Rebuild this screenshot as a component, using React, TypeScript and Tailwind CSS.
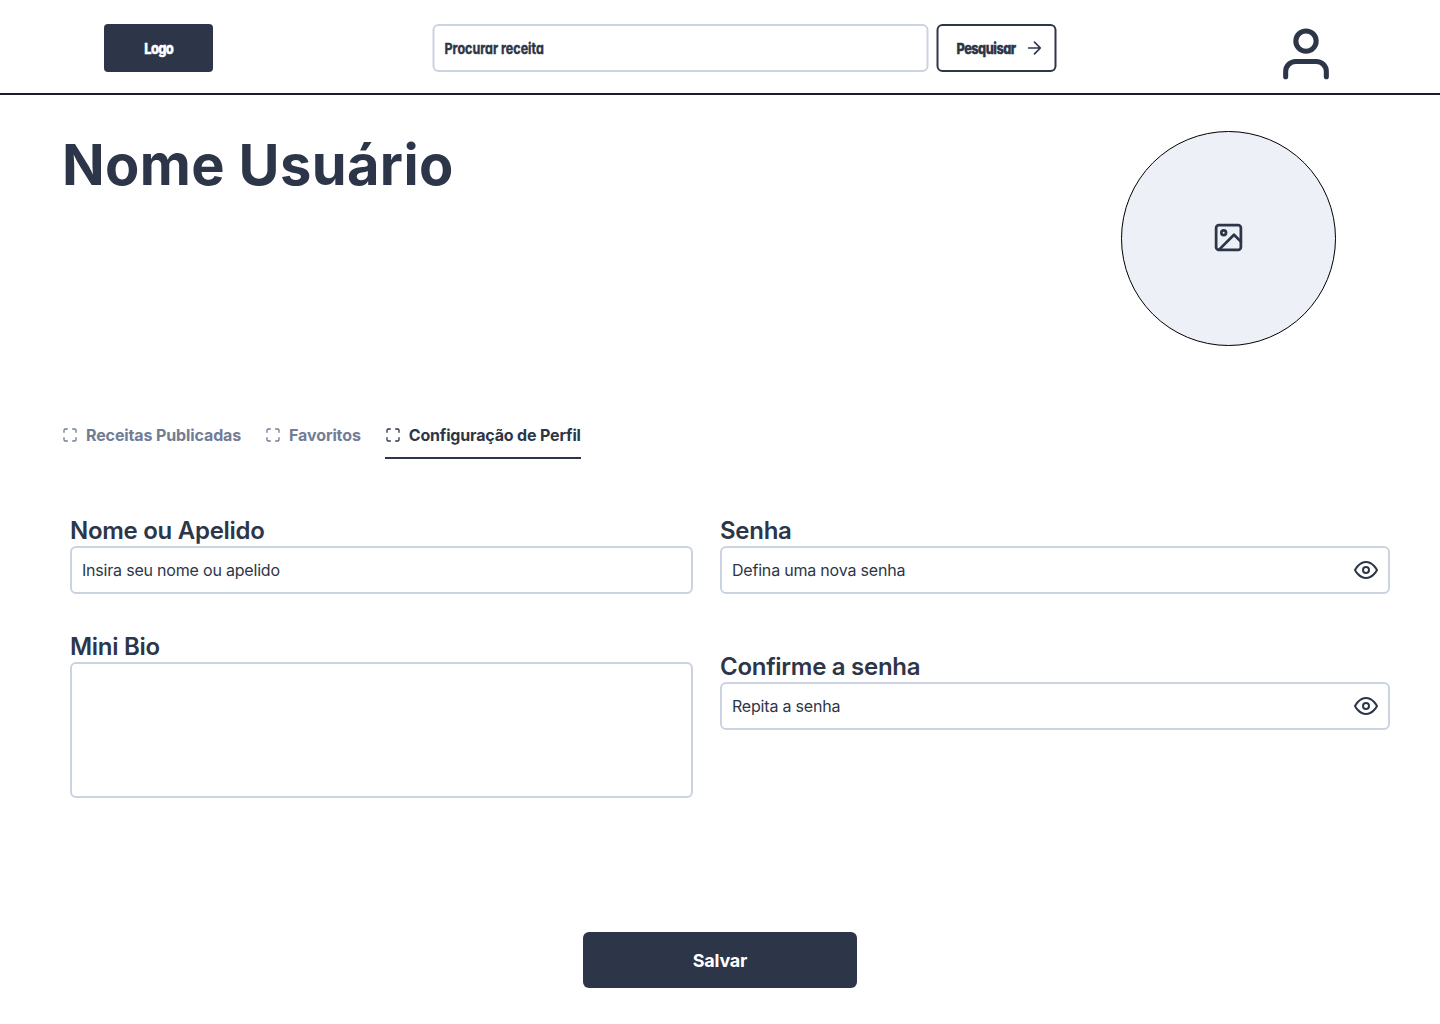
import React from "react";

type IconProps = { className?: string; strokeWidth?: number; children: React.ReactNode };

function Icon({ className = "", strokeWidth = 2, children }: IconProps) {
  return (
    <svg viewBox="0 0 24 24" fill="none" stroke="currentColor" strokeWidth={strokeWidth} strokeLinecap="round" strokeLinejoin="round" className={`shrink-0 ${className}`}>
      {children}
    </svg>
  );
}

function EyeIcon() {
  return (
    <Icon className="size-6">
      <path d="M1 12s4-8 11-8 11 8 11 8-4 8-11 8-11-8-11-8z" />
      <circle cx="12" cy="12" r="3" />
    </Icon>
  );
}

function Tab({ label, active = false }: { label: string; active?: boolean }) {
  return (
    <div className={`flex h-12 items-center gap-2 border-b-2 pt-0.5 ${active ? "border-[#2d3648] tracking-[-0.17px] text-[#2d3648]" : "border-transparent tracking-[-0.12px] text-[#717d96]"}`}>
      <Icon className="size-4">
        <path d="M8 3H5a2 2 0 0 0-2 2v3m18 0V5a2 2 0 0 0-2-2h-3m0 18h3a2 2 0 0 0 2-2v-3M3 16v3a2 2 0 0 0 2 2h3" />
      </Icon>
      <span className="text-base leading-6 font-bold whitespace-nowrap">{label}</span>
    </div>
  );
}

function Label({ children }: { children: string }) {
  return <div className="h-8 pt-px text-2xl leading-8 font-semibold tracking-[-0.28px]">{children}</div>;
}

function Field({ label, placeholder, password = false }: { label: string; placeholder: string; password?: boolean }) {
  return (
    <div>
      <Label>{label}</Label>
      <div className="flex h-12 items-center justify-between rounded-md border-2 border-[#cbd2e0] px-2.5">
        <span className="text-base tracking-[-0.2px]">{placeholder}</span>
        {password && <EyeIcon />}
      </div>
    </div>
  );
}

export default function App() {
  return (
    <div className="h-[1024px] w-[1440px] overflow-hidden bg-white font-['Inter',sans-serif] text-[#2d3648]">
      <header className="flex h-[95px] items-start border-b-2 border-[#1c1b29] pt-6 pl-[104px] [font-feature-settings:'cv11']">
        <div className="flex h-12 w-[109px] items-center justify-center rounded bg-[#2d3648] pt-0.5 text-white">
          <span className="scale-x-[0.86] text-[15px] font-extrabold tracking-[-0.8px] [-webkit-text-stroke:0.4px]">Logo</span>
        </div>
        <div className="ml-[219px] flex h-12 w-[496px] translate-x-[0.5px] items-center rounded-md border-2 border-[#cbd2e0] pt-0.5 pl-2.5">
          <span className="origin-left scale-x-[0.835] text-[15px] font-bold [-webkit-text-stroke:0.4px]">Procurar receita</span>
        </div>
        <div className="ml-[8px] flex h-12 w-[120px] translate-x-[0.5px] items-center rounded-md border-2 border-[#2d3648] pl-[18px]">
          <span className="w-[68px] origin-left scale-x-[0.85] pt-0.5 text-[15px] font-extrabold tracking-[-0.6px] [-webkit-text-stroke:0.4px]">Pesquisar</span>
          <Icon className="size-5">
            <path d="M5 12h14M12 5l7 7-7 7" />
          </Icon>
        </div>
        <Icon className="-mt-px ml-[219px] size-[61px] translate-x-[0.5px] translate-y-[0.3px]">
          <path d="M20 21v-2a4 4 0 0 0-4-4H8a4 4 0 0 0-4 4v2" />
          <circle cx="12" cy="7" r="4" />
        </Icon>
      </header>

      <section className="flex h-[316px] items-start justify-between pt-9 pr-[104px] pl-[62px]">
        <h1 className="text-[56px] leading-[68px] font-bold tracking-[0.37px]">Nome Usuário</h1>
        <div className="flex size-[215px] items-center justify-center rounded-full border border-black bg-[#edf0f7] pb-0.5">
          <Icon className="size-[33px]">
            <rect x="3" y="3" width="18" height="18" rx="2" />
            <circle cx="8.5" cy="8.5" r="1.7" />
            <path d="M21 15l-5-5L5 21" />
          </Icon>
        </div>
      </section>

      <nav className="flex gap-6 pl-[62px]">
        <Tab label="Receitas Publicadas" />
        <Tab label="Favoritos" />
        <Tab label="Configuração de Perfil" active />
      </nav>

      <main className="grid h-[417px] grid-cols-[623px_670px] gap-x-[27px] pt-[55px] pl-[70px]">
        <div className="flex flex-col gap-9">
          <Field label="Nome ou Apelido" placeholder="Insira seu nome ou apelido" />
          <div>
            <Label>Mini Bio</Label>
            <div className="h-[136px] rounded-md border-2 border-[#cbd2e0]" />
          </div>
        </div>
        <div className="flex flex-col gap-14">
          <Field label="Senha" placeholder="Defina uma nova senha" password />
          <Field label="Confirme a senha" placeholder="Repita a senha" password />
        </div>
      </main>

      <div className="flex justify-center pt-14">
        <button className="h-14 w-[274px] rounded-md bg-[#2d3648] pt-0.5 text-lg font-bold tracking-[-0.2px] text-white">Salvar</button>
      </div>
    </div>
  );
}
